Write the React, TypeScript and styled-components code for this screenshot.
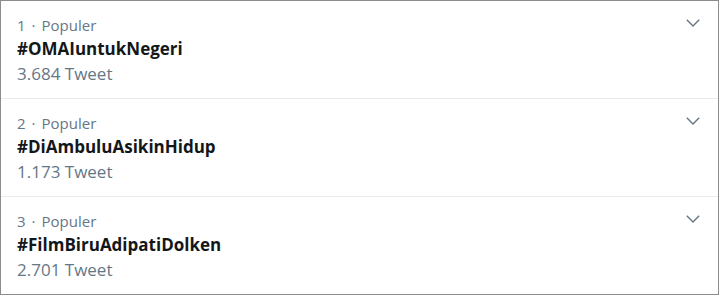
import React from "react";
import styled, { createGlobalStyle } from "styled-components";

const Global = createGlobalStyle`
  html, body { margin: 0; padding: 0; background: #ffffff; }
  body { font-family: "Open Sans", "Noto Sans", "Liberation Sans", sans-serif; }
  * { box-sizing: border-box; }
`;

const Frame = styled.div`
  width: 719px;
  height: 295px;
  border: 1px solid #8c8c8c;
  background: #ffffff;
  display: flex;
  flex-direction: column;
  overflow: hidden;
`;

const Row = styled.div<{ $last?: boolean }>`
  flex: ${(p) => (p.$last ? "1" : "0 0 98px")};
  display: flex;
  justify-content: space-between;
  align-items: flex-start;
  padding: 13px 16px 0 16px;
  border-bottom: ${(p) => (p.$last ? "none" : "1px solid #e6ecf0")};
`;

const Info = styled.div`
  display: flex;
  flex-direction: column;
`;

const Meta = styled.div`
  font-size: 15px;
  line-height: 22px;
  color: #657786;
`;

const Dot = styled.span`
  margin: 0 6px;
`;

const Tag = styled.div`
  font-size: 17px;
  font-weight: 700;
  line-height: 25px;
  color: #14171a;
`;

const Count = styled.div`
  font-size: 17px;
  line-height: 25px;
  color: #657786;
`;

const Chevron = styled.div`
  width: 14px;
  height: 8px;
  margin-top: 5px;
  margin-right: 2px;
  color: #657786;
  display: flex;
`;

const trends = [
  { rank: 1, tag: "#OMAIuntukNegeri", count: "3.684 Tweet" },
  { rank: 2, tag: "#DiAmbuluAsikinHidup", count: "1.173 Tweet" },
  { rank: 3, tag: "#FilmBiruAdipatiDolken", count: "2.701 Tweet" },
];

export default function App() {
  return (
    <>
      <Global />
      <Frame>
        {trends.map((t, i) => (
          <Row key={t.rank} $last={i === trends.length - 1}>
            <Info>
              <Meta>
                {t.rank}
                <Dot>·</Dot>
                Populer
              </Meta>
              <Tag>{t.tag}</Tag>
              <Count>{t.count}</Count>
            </Info>
            <Chevron>
              <svg width="14" height="8" viewBox="0 0 14 8" fill="none">
                <path d="M0.8 0.8 L7 7 L13.2 0.8" stroke="currentColor" strokeWidth="1.4" />
              </svg>
            </Chevron>
          </Row>
        ))}
      </Frame>
    </>
  );
}
